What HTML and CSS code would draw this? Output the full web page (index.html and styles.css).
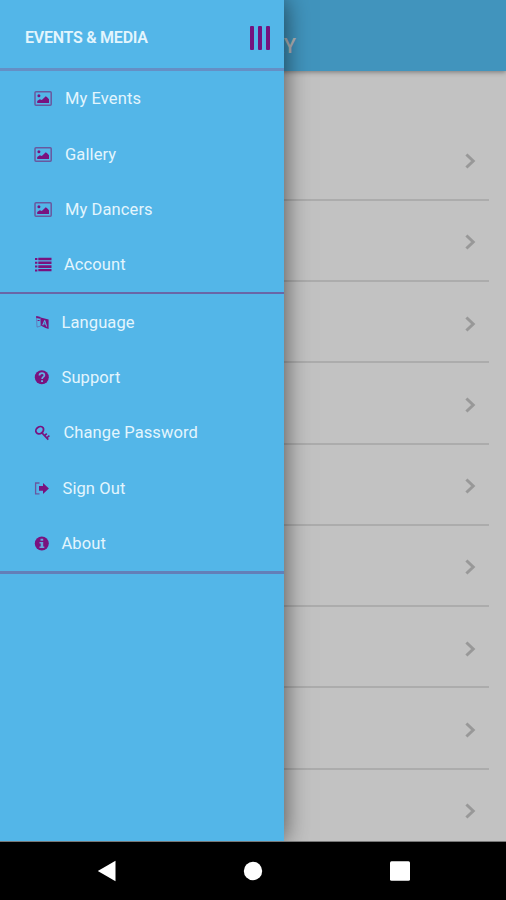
FILE: index.html
```html
<!DOCTYPE html>
<html lang="en">
<head>
<meta charset="utf-8">
<title>Events &amp; Media</title>
<link rel="stylesheet" href="styles.css">
</head>
<body>
<svg class="symbols" aria-hidden="true">
  <symbol id="picture" viewBox="0 0 18 15"><rect x="1" y=".8" width="16.2" height="13.4" rx="1" fill="none" stroke="#69589f" stroke-width="1.5"/><circle cx="4.9" cy="4.7" r="1.5"/><path d="M3.2 12V10l2.6-1.8 2 .8 4-3.8 1.6 1.4L15 8.3V12z"/></symbol>
  <symbol id="list" viewBox="0 0 18 15"><path d="M1 1h2.4v2H1zM4.3 .7H17.5v2.6H4.3zM1 4.8h2.4v2H1zM4.3 4.5H17.5v2.6H4.3zM1 8.6h2.4v2H1zM4.3 8.3H17.5v2.6H4.3zM1 12.4h2.4v2H1zM4.3 12.1H17.5v2.2H4.3z"/></symbol>
  <symbol id="language" viewBox="0 0 15 15"><path d="M2.5 1.5l4 1.3v8.3l-3.5 1z" fill="none" stroke="#69589f" stroke-width=".6"/><path d="M2.2 .9l4.4 1.2-.4 1.6-3.9-.8zM3.6 5h2v1.1h-2z"/><path fill-rule="evenodd" d="M6.6 2.6l8 1.8V14l-3-.9-4.5-2.3zM10.3 5L8.2 10l1.1.4.5-1.3 1.8.6.5 1.7 1.1.4-1.9-6.3zm.4 1.8l.6 1.9-1.1-.3z"/></symbol>
  <symbol id="question" viewBox="0 0 15 15"><circle cx="7.8" cy="7.3" r="7"/><path d="M5.4 5.5C5.5 3.9 6.5 3.1 7.9 3.1s2.5.8 2.5 2.1c0 1.7-2.3 1.8-2.3 3.7" fill="none" stroke="#63b2e3" stroke-width="1.7"/><path d="M7.1 10.2H9V12H7.1z" fill="#63b2e3"/></symbol>
  <symbol id="key" viewBox="0 0 16 16"><g fill="none" stroke="#79127f"><ellipse cx="5.7" cy="5.2" rx="4.1" ry="3.3" transform="rotate(-35 5.7 5.2)" stroke-width="1.8"/><path d="M7.7 7.6l6.6 7M10.5 10.6l2.3-2M12.6 13l2.8-2.4" stroke-width="1.6"/></g></symbol>
  <symbol id="signout" viewBox="0 0 15 15"><path d="M5.5 2H1.6v10.8h3.9" fill="none" stroke="#69589f" stroke-width="1.3"/><path d="M5 5.1h4V1.9l5.9 5.5L9 12.9V9.8H5z"/></symbol>
  <symbol id="info" viewBox="0 0 15 15"><circle cx="7.8" cy="7.5" r="7"/><path d="M6.5 2.8h2.7v2H6.5zM5.5 6h3.7v4.4h1.1V12H5.5v-1.6h1.2V7.5H5.5z" fill="#63a5da"/></symbol>
  <symbol id="chevron" viewBox="0 0 12 16"><path d="M1.4 1.5L8.2 8l-6.8 6.5" fill="none" stroke="#989898" stroke-width="3"/></symbol>
</svg>
<div class="screen">
  <main class="page">
    <header class="topbar"><h1>GALLERY</h1></header>
    <div class="rows">
      <div class="row"><svg><use href="#chevron"/></svg></div>
      <div class="row"><svg><use href="#chevron"/></svg></div>
      <div class="row"><svg><use href="#chevron"/></svg></div>
      <div class="row"><svg><use href="#chevron"/></svg></div>
      <div class="row"><svg><use href="#chevron"/></svg></div>
      <div class="row"><svg><use href="#chevron"/></svg></div>
      <div class="row"><svg><use href="#chevron"/></svg></div>
      <div class="row"><svg><use href="#chevron"/></svg></div>
      <div class="row"><svg><use href="#chevron"/></svg></div>
    </div>
    <aside class="drawer">
      <div class="drawer-head"><h2>EVENTS &amp; MEDIA</h2><div class="bars"><i></i><i></i><i></i></div></div>
      <nav class="group">
        <a class="item wide"><svg><use href="#picture"/></svg><span>My Events</span></a>
        <a class="item wide"><svg><use href="#picture"/></svg><span>Gallery</span></a>
        <a class="item wide"><svg><use href="#picture"/></svg><span>My Dancers</span></a>
        <a class="item list"><svg><use href="#list"/></svg><span>Account</span></a>
      </nav>
      <nav class="group last">
        <a class="item"><svg><use href="#language"/></svg><span>Language</span></a>
        <a class="item"><svg><use href="#question"/></svg><span>Support</span></a>
        <a class="item key"><svg><use href="#key"/></svg><span>Change Password</span></a>
        <a class="item out"><svg><use href="#signout"/></svg><span>Sign Out</span></a>
        <a class="item"><svg><use href="#info"/></svg><span>About</span></a>
      </nav>
    </aside>
  </main>
  <footer class="navbar">
    <svg viewBox="0 0 20 22"><path d="M.8 11L18.5.8v20.4z"/></svg>
    <svg viewBox="0 0 20 22"><circle cx="10" cy="11" r="9.2"/></svg>
    <svg viewBox="0 0 20 22"><rect y="1.2" width="20" height="19.6" rx="1.5"/></svg>
  </footer>
</div>
</body>
</html>
```
FILE: styles.css
```css
* { box-sizing: border-box; }
body { margin: 0; font-family: Roboto, sans-serif; background: #000; }
h1, h2 { margin: 0; }
.symbols { position: absolute; width: 0; height: 0; }
.screen { height: 900px; display: flex; flex-direction: column; overflow: hidden; }
.page { position: relative; height: 842px; background: #c2c2c2; overflow: hidden; border-bottom: 1px solid #777; }
.topbar { height: 71px; padding: 33px 0 0 200px; background: #4194bd; box-shadow: 0 1px 5px rgba(0, 0, 0, .4); }
.topbar h1 { width: 96px; text-align: right; font-size: 20px; line-height: 26px; font-weight: 500; color: #b5b8b9; }
.rows { margin: 48.5px 17px 0 0; }
.row { height: 81.25px; display: flex; align-items: center; justify-content: flex-end; padding-right: 12px; border-bottom: 2px solid #acacac; }
.row svg { width: 12px; height: 16px; margin-top: 4px; }
.drawer { position: absolute; left: 0; top: 0; width: 284px; height: 100%; background: #53b6e8; box-shadow: 0 0 24px rgba(0, 0, 0, .62); }
.drawer-head { height: 71px; padding: 7px 14px 0 25px; display: flex; align-items: center; justify-content: space-between; border-bottom: 3px solid #658fc5; }
.drawer-head h2 { font-size: 16px; font-weight: 600; letter-spacing: -.25px; color: #e3f5fd; }
.bars { display: flex; gap: 4px; }
.bars i { width: 4px; height: 24px; border-radius: 1px; background: #74127e; }
.group { border-bottom: 2px solid #6966a7; }
.group.last { border-bottom: 3px solid #637fb8; }
.item { height: 55.35px; padding-left: 34px; display: flex; align-items: center; color: #e3f5fd; font-size: 16.5px; letter-spacing: .1px; }
.item svg { width: 15px; height: 15px; margin-right: 12.5px; fill: #79127f; }
.wide svg { width: 18px; margin-right: 13px; }
.list svg { width: 18px; margin-right: 12px; }
.key svg { width: 16px; height: 16px; margin-right: 13.5px; }
.out svg { margin-right: 13.5px; }
.navbar { height: 58px; background: #000; display: flex; justify-content: space-between; align-items: center; padding: 0 96.5px; }
.navbar svg { width: 20px; height: 22px; fill: #fff; }
```
